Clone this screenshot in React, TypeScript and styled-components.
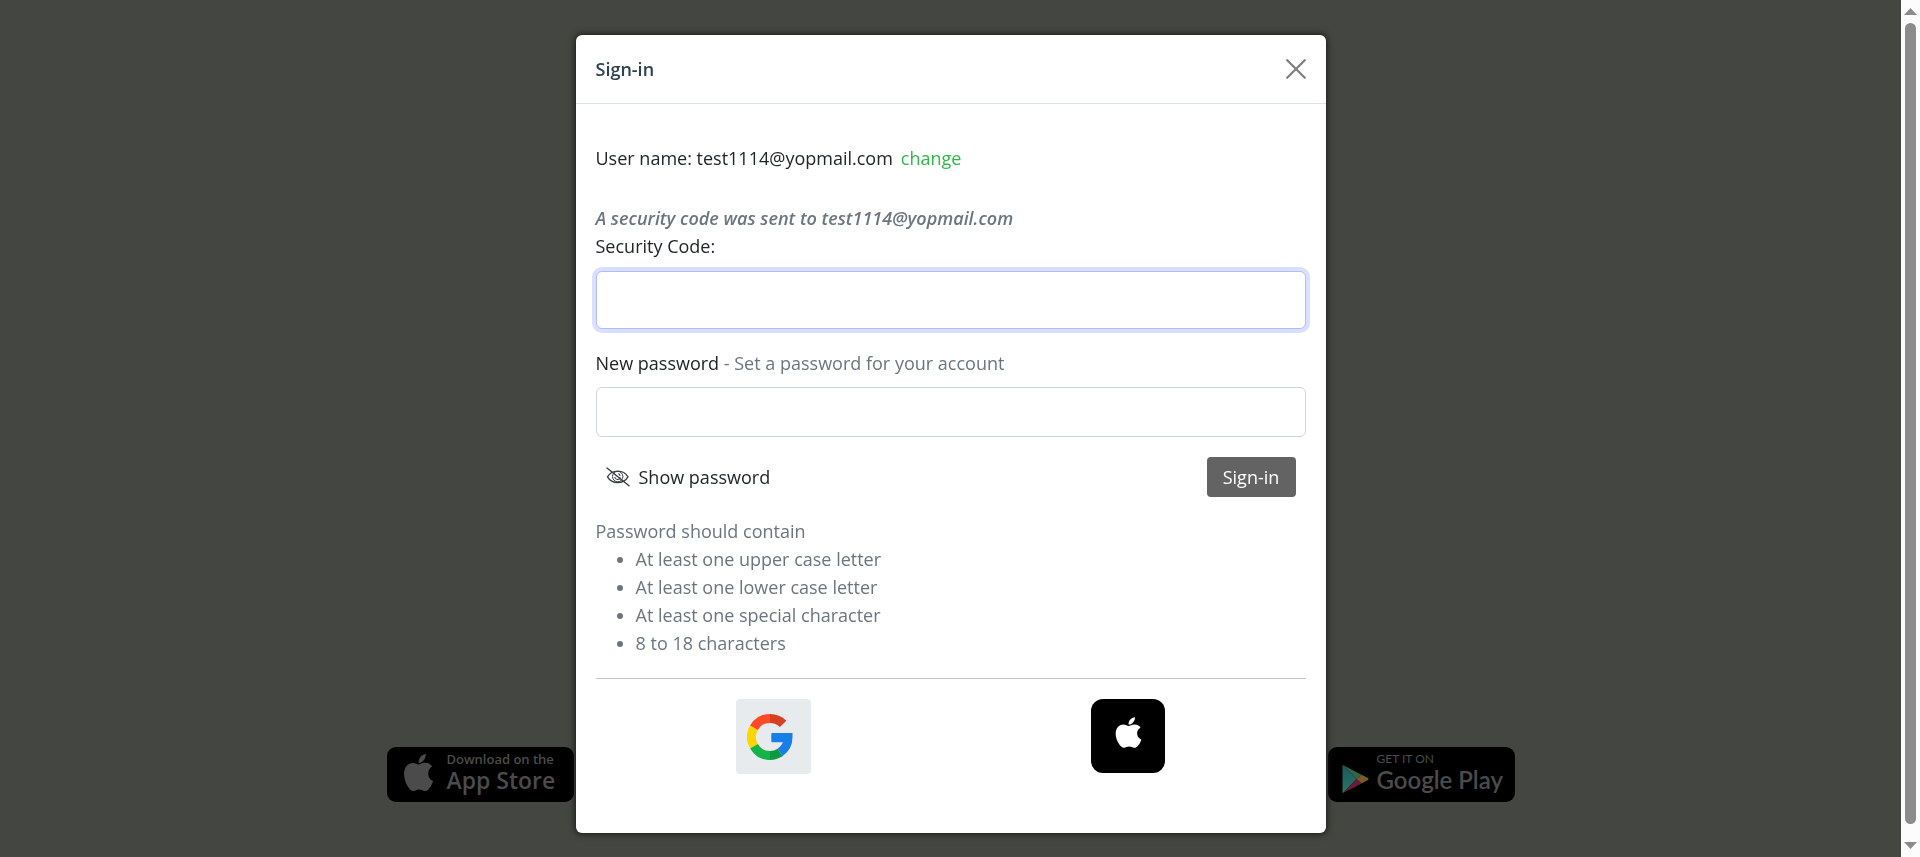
import React, { useState } from "react";
import styled, { createGlobalStyle, css } from "styled-components";
import { FaApple } from "react-icons/fa";

const GlobalStyle = createGlobalStyle`
  *, *::before, *::after { box-sizing: border-box; }
  html, body { margin: 0; height: 100%; }
  body {
    overflow: hidden;
    background: #444642;
    color: #212529;
    font-family: "Open Sans", "Noto Sans", sans-serif;
    font-size: 18px;
    font-weight: 400;
    line-height: 28px;
  }
  #root { height: 100%; }
`;

const Screen = styled.div`
  display: grid;
  grid-template-columns: minmax(0, 1fr) 19px;
  min-height: 100vh;
`;

const Landing = styled.main`
  display: flex;
  flex-direction: column;
  justify-content: flex-end;
  align-items: center;
  padding-bottom: 55px;
`;

const StoreRow = styled.div`
  display: flex;
  justify-content: space-between;
  width: 100%;
  max-width: 1128px;
`;

const StoreBadge = styled.a<{ $inset: number; $gap: number }>`
  display: flex;
  gap: ${(p) => p.$gap}px;
  width: 187px;
  height: 55px;
  padding-left: ${(p) => p.$inset}px;
  border-radius: 9px;
  background: #000;
  color: #4b4b4b;
  text-decoration: none;
  white-space: nowrap;
`;

const BadgeMark = styled.span<{ $top: number }>`
  display: flex;
  align-items: flex-start;
  padding-top: ${(p) => p.$top}px;
`;

const BadgeText = styled.span`
  display: flex;
  flex-direction: column;
  padding-top: 4px;
`;

const BadgeSmall = styled.span<{ $light?: boolean }>`
  font-family: ${(p) => (p.$light ? "Lato" : '"Open Sans"')}, sans-serif;
  font-size: ${(p) => (p.$light ? 12 : 13)}px;
  font-weight: ${(p) => (p.$light ? 400 : 600)};
  line-height: 16px;
`;

const BadgeLarge = styled.span<{ $lato?: boolean }>`
  font-family: ${(p) => (p.$lato ? "Lato" : '"Open Sans"')}, sans-serif;
  font-size: ${(p) => (p.$lato ? 24 : 23)}px;
  font-weight: 600;
  line-height: 26px;
`;

const ScrollTrack = styled.div`
  display: flex;
  flex-direction: column;
  align-items: center;
  justify-content: space-between;
  padding: 8px 0;
  background: #fcfcfc;
`;

const ScrollArrow = styled.span<{ $down?: boolean }>`
  width: 13px;
  height: 7px;
  background: #8b8b8b;
  clip-path: ${(p) =>
    p.$down ? "polygon(0 0, 100% 0, 50% 100%)" : "polygon(50% 0, 100% 100%, 0 100%)"};
`;

const ScrollThumb = styled.span`
  flex: 1;
  width: 11px;
  margin: 8px 0 18px;
  border-radius: 6px;
  background: #8b8b8b;
`;

const Overlay = styled.div`
  position: fixed;
  inset: 0 19px 0 0;
  display: flex;
  justify-content: center;
  align-items: flex-start;
  padding-top: 35px;
`;

const Dialog = styled.section`
  width: 100%;
  max-width: 750px;
  padding-bottom: 59px;
  border-radius: 6px;
  background: #fff;
  box-shadow: 0 0 6px 1px #1a1a1a;
`;

const DialogHeader = styled.header`
  display: flex;
  align-items: center;
  justify-content: space-between;
  padding: 20px;
  border-bottom: 1px solid #dee2e6;
`;

const Title = styled.h1`
  margin: 0;
  color: #2c4251;
  font-size: 18px;
  font-weight: 600;
  line-height: 28px;
`;

const CloseButton = styled.button`
  display: flex;
  padding: 0;
  border: 0;
  background: none;
  color: #7f7f7f;
  cursor: pointer;
`;

const Form = styled.form`
  display: flex;
  flex-direction: column;
  padding: 40px 20px 0;
`;

const UserLine = styled.div`
  display: flex;
  gap: 8px;
  margin-bottom: 32px;
`;

const ChangeLink = styled.a`
  color: #2fb84a;
  text-decoration: none;
`;

const Notice = styled.em`
  color: #6c757d;
  font-weight: 600;
`;

const Muted = styled.span`
  color: #6c757d;
`;

const Field = styled.div<{ $gap: number }>`
  display: flex;
  flex-direction: column;
  gap: ${(p) => p.$gap}px;
  margin-bottom: 20px;
`;

const TextInput = styled.input<{ $active?: boolean }>`
  width: 100%;
  height: ${(p) => (p.$active ? 58 : 50)}px;
  padding: 8px 16px;
  border: 1px solid #ced4da;
  border-radius: 6px;
  outline: 0;
  background: #fff;
  font: inherit;
  ${(p) =>
    p.$active &&
    css`
      border-color: #b1bdf5;
      box-shadow: 0 0 0 4px #dadffb;
    `}
`;

const Actions = styled.div`
  display: flex;
  align-items: center;
  justify-content: space-between;
  padding: 0 10px;
  margin-bottom: 20px;
`;

const ToggleButton = styled.button`
  display: flex;
  align-items: center;
  gap: 9px;
  padding: 0;
  border: 0;
  background: none;
  color: #212529;
  font: inherit;
  cursor: pointer;
`;

const SubmitButton = styled.button`
  height: 40px;
  width: 89px;
  padding: 0;
  border: 0;
  border-radius: 4px;
  background: #636363;
  color: #fff;
  font: inherit;
  cursor: pointer;
`;

const Rules = styled.ul`
  margin: 0 0 21px;
  padding-left: 40px;
  color: #6c757d;
`;

const Providers = styled.div`
  display: grid;
  grid-template-columns: 1fr 1fr;
  justify-items: center;
  padding-top: 20px;
  border-top: 1px solid #c4c6c8;
`;

const ProviderButton = styled.button<{ $dark?: boolean }>`
  display: flex;
  align-items: center;
  justify-content: center;
  width: ${(p) => (p.$dark ? 74 : 75)}px;
  height: ${(p) => (p.$dark ? 74 : 75)}px;
  padding: ${(p) => (p.$dark ? "0 0 8px" : "0 6px 0 0")};
  border: 0;
  border-radius: ${(p) => (p.$dark ? 12 : 4)}px;
  background: ${(p) => (p.$dark ? "#000" : "#e8ebee")};
  color: #fff;
  cursor: pointer;
`;

const GoogleMark = () => (
  <svg width="46" height="46" viewBox="-23 -23 46 46" fill="none" strokeWidth="9" aria-hidden="true">
    <path stroke="#ffd500" d="M-16.02 9.25A18.5 18.5 0 0 1 -16.02 -9.25" />
    <path stroke="#ff4b26" d="M-16.02 -9.25A18.5 18.5 0 0 1 0 -18.5" />
    <path stroke="#d93f21" d="M0 -18.5A18.5 18.5 0 0 1 13.1 -13.1" />
    <path stroke="#13b34a" d="M0 18.5A18.5 18.5 0 0 1 -16.02 9.25" />
    <path stroke="#0f993e" d="M10.08 15.52A18.5 18.5 0 0 1 0 18.5" />
    <path
      fill="#187fe8"
      stroke="none"
      d="M2.3 -4H22.5V0A22.8 22.8 0 0 1 12.4 19.2L7.6 11.7A14 14 0 0 0 13 5.3H2.3Q1.3 5.3 1.3 4.3V-3Q1.3 -4 2.3 -4Z"
    />
  </svg>
);

const PlayMark = () => (
  <svg width="27" height="30" viewBox="0 0 27 30" aria-hidden="true">
    <defs>
      <linearGradient id="playBody" x1="0" y1="0" x2="0" y2="1">
        <stop offset="0" stopColor="#1c5560" />
        <stop offset="1" stopColor="#277a62" />
      </linearGradient>
    </defs>
    <path fill="url(#playBody)" d="M1 1L14.5 15L1 29Q.5 29 .5 28V2Q.5 1 1 1Z" />
    <path fill="#326447" d="M1 1L19.5 10.8L14.5 15Z" />
    <path fill="#7a5a26" d="M19.5 10.8L26 14Q27 15 26 16L19.5 19.5L14.5 15Z" />
    <path fill="#6a1c3b" d="M14.5 15L19.5 19.5L1 29Z" />
  </svg>
);

const EyeSlash = () => (
  <svg width="24" height="20" viewBox="0 0 24 20" fill="none" stroke="#3a3d40" aria-hidden="true">
    <path strokeWidth="1.3" d="M1.5 9.8C6 2.2 17.5 2.2 22 9.8C17.5 17.4 6 17.4 1.5 9.8Z" />
    <circle strokeWidth="1" cx="11.7" cy="9.6" r="5.2" />
    <path strokeWidth="1.1" d="M8.7 10A3 3 0 0 0 14.5 10.5M12.2 6.8A2 2 0 0 1 14 9" />
    <path strokeWidth="1.4" strokeLinecap="round" d="M1 1L23 18.8" />
  </svg>
);

const rules = [
  "At least one upper case letter",
  "At least one lower case letter",
  "At least one special character",
  "8 to 18 characters",
];

export default function App() {
  const [visible, setVisible] = useState(false);

  return (
    <>
      <GlobalStyle />
      <Screen>
        <Landing>
          <StoreRow>
            <StoreBadge href="#app-store" $inset={17} $gap={14}>
              <BadgeMark $top={7}>
                <svg width="29" height="37" viewBox="4 32 376 448" preserveAspectRatio="none" fill="currentColor" aria-hidden="true">
                  <path d="M318.7 268.7c-.2-36.7 16.4-64.4 50-84.8-18.8-26.9-47.2-41.7-84.7-44.6-35.5-2.8-74.3 20.7-88.5 20.7-15 0-49.4-19.7-76.4-19.7C63.3 141.2 4 184.8 4 273.5q0 39.3 14.4 81.2c12.8 36.7 59 126.7 107.2 125.2 25.2-.6 43-17.9 75.8-17.9 31.8 0 48.3 17.9 76.4 17.9 48.6-.7 90.4-82.5 102.6-119.3-65.2-30.7-61.7-90-61.7-91.9zm-56.6-164.2c27.3-32.4 24.8-61.9 24-72.5-24.1 1.4-52 16.4-67.9 34.9-17.5 19.8-27.8 44.3-25.6 71.9 26.1 2 49.9-11.4 69.5-34.3z" />
                </svg>
              </BadgeMark>
              <BadgeText>
                <BadgeSmall>Download on the</BadgeSmall>
                <BadgeLarge>App Store</BadgeLarge>
              </BadgeText>
            </StoreBadge>
            <StoreBadge href="#google-play" $inset={14} $gap={8}>
              <BadgeMark $top={17}>
                <PlayMark />
              </BadgeMark>
              <BadgeText>
                <BadgeSmall $light>GET IT ON</BadgeSmall>
                <BadgeLarge $lato>Google Play</BadgeLarge>
              </BadgeText>
            </StoreBadge>
          </StoreRow>
        </Landing>
        <ScrollTrack aria-hidden="true">
          <ScrollArrow />
          <ScrollThumb />
          <ScrollArrow $down />
        </ScrollTrack>
      </Screen>
      <Overlay>
        <Dialog role="dialog" aria-labelledby="dialog-title">
          <DialogHeader>
            <Title id="dialog-title">Sign-in</Title>
            <CloseButton type="button" aria-label="Close">
              <svg width="20" height="20" viewBox="0 0 20 20" stroke="currentColor" strokeWidth="2.2" strokeLinecap="round">
                <path d="M1.2 1.2L18.8 18.8M18.8 1.2L1.2 18.8" />
              </svg>
            </CloseButton>
          </DialogHeader>
          <Form onSubmit={(e) => e.preventDefault()}>
            <UserLine>
              <span>User name: test1114@yopmail.com</span>
              <ChangeLink href="#change">change</ChangeLink>
            </UserLine>
            <Notice>A security code was sent to test1114@yopmail.com</Notice>
            <Field $gap={11}>
              <label htmlFor="code">Security Code:</label>
              <TextInput id="code" type="text" autoComplete="one-time-code" $active />
            </Field>
            <Field $gap={10}>
              <label htmlFor="password">
                New password <Muted>- Set a password for your account</Muted>
              </label>
              <TextInput id="password" type={visible ? "text" : "password"} autoComplete="new-password" />
            </Field>
            <Actions>
              <ToggleButton type="button" aria-pressed={visible} onClick={() => setVisible(!visible)}>
                <EyeSlash />
                Show password
              </ToggleButton>
              <SubmitButton type="submit">Sign-in</SubmitButton>
            </Actions>
            <Muted>Password should contain</Muted>
            <Rules>
              {rules.map((rule) => (
                <li key={rule}>{rule}</li>
              ))}
            </Rules>
            <Providers>
              <ProviderButton type="button" aria-label="Sign in with Google">
                <GoogleMark />
              </ProviderButton>
              <ProviderButton type="button" aria-label="Sign in with Apple" $dark>
                <FaApple size={35} aria-hidden="true" />
              </ProviderButton>
            </Providers>
          </Form>
        </Dialog>
      </Overlay>
    </>
  );
}
